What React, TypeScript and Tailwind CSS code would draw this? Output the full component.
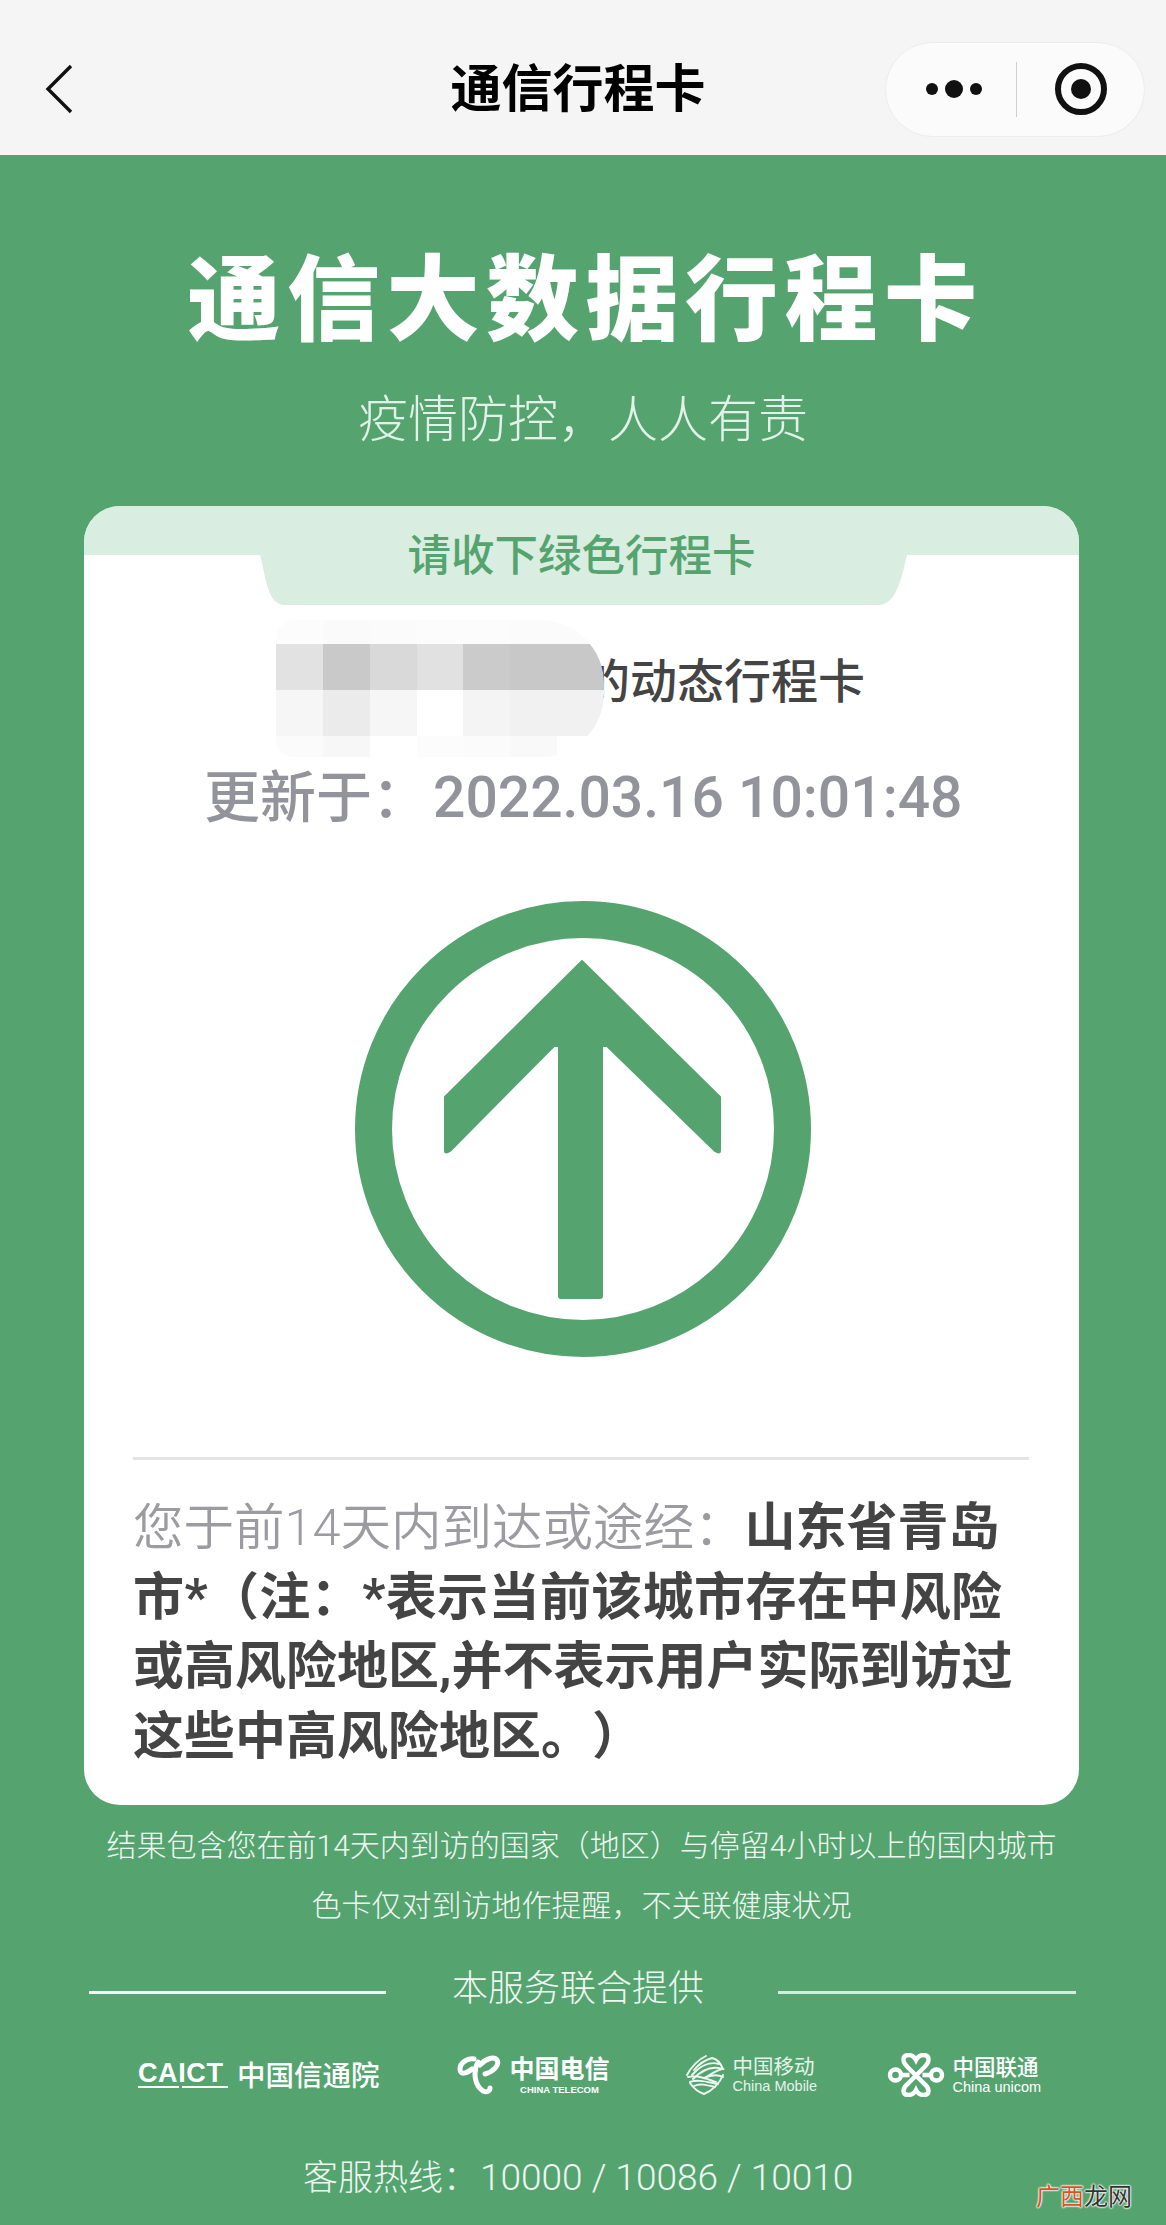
const mosaic = [
  ['#fcfcfc', '#fafafa', '#fbfbfb', '#fcfcfc', '#fcfcfc', '#fbfbfb', '#fbfbfb'],
  ['#e2e2e2', '#c9c9c9', '#d9d9d9', '#e1e1e1', '#cbcbcb', '#c8c8c8', '#c8c8c8'],
  ['#f6f6f6', '#ebebeb', '#f6f6f6', '#ffffff', '#f4f4f4', '#f1f1f1', '#f1f1f1'],
  ['#fbfbfb', '#f7f7f7', '#ffffff', '#fcfcfc', '#fbfbfb', '#f9f9f9', '#ffffff'],
]

function Mosaic() {
  return (
    <div className="relative z-10 grid w-[328px] h-[137px] shrink-0 grid-cols-7 grid-rows-[24px_46px_46px_21px] overflow-hidden rounded-tl-[20px] rounded-r-[64px] rounded-bl-[18px]">
      {mosaic.flat().map((c, i) => (
        <div key={i} style={{ backgroundColor: c }} />
      ))}
    </div>
  )
}

function BackIcon() {
  return (
    <svg width="28" height="50" viewBox="0 0 28 50" fill="none">
      <path d="M26 2 L3 25 L26 48" stroke="#111" strokeWidth="3.4" />
    </svg>
  )
}

function Capsule() {
  return (
    <div className="flex h-[95px] w-[260px] items-center rounded-full border border-[#ececec] bg-[#fbfbfb]">
      <div className="flex w-[130px] items-center justify-end gap-[7px] pr-[34px]">
        <span className="h-[12px] w-[12px] rounded-full bg-[#111]" />
        <span className="h-[18px] w-[18px] rounded-full bg-[#111]" />
        <span className="h-[12px] w-[12px] rounded-full bg-[#111]" />
      </div>
      <div className="h-[55px] w-px bg-[#cfcfcf]" />
      <div className="ml-[38px] flex h-[52px] w-[52px] items-center justify-center rounded-full border-[6px] border-[#111]">
        <span className="h-[20px] w-[20px] rounded-full bg-[#111]" />
      </div>
    </div>
  )
}

function ArrowBadge() {
  return (
    <svg width="456" height="456" viewBox="0 0 456 456" className="mx-auto block translate-x-[1px]">
      <circle cx="228" cy="228" r="209.5" fill="none" stroke="#55a470" strokeWidth="37" />
      <path
        d="M227 60 L365 196 V250 Q365 253 360 250 L252 145 H247 V395 Q247 397 245 397 H206 Q204 397 204 395 V145 H199 L95 250 Q90 253 90 250 V196 Z"
        fill="#55a470"
        stroke="#55a470"
        strokeWidth="2"
        strokeLinejoin="round"
      />
    </svg>
  )
}

function TelecomIcon() {
  return (
    <svg width="44" height="40" viewBox="0 0 44 40" fill="none" stroke="#fff" strokeWidth="5" strokeLinecap="round" className="shrink-0">
      <path d="M17 4 C10 3 3 8 3 14 C3 20 9 19 15 14" />
      <path d="M23 10 C28 4 37 1 40 5 C43 10 36 17 28 19" />
      <path d="M21 7 C16 16 17 30 26 36 C30 38 33 36 33 33" />
    </svg>
  )
}

function MobileIcon() {
  return (
    <svg width="40" height="40" viewBox="0 0 40 40" fill="none" stroke="#eef7f1" strokeWidth="1.9" strokeLinecap="round" className="shrink-0">
      <path d="M2 20 C6 12 14 4 21 1" />
      <path d="M9 15 C14 9 20 5 27 3 C32 4 36 9 38 14" />
      <path d="M7 20 C14 12 24 6 34 9" />
      <path d="M8 24 C16 16 26 10 37 14 C30 16 25 20 19 23 C28 19 34 20 38 22" />
      <path d="M3 22 C12 20 20 23 31 27" />
      <path d="M5 27 C13 24 22 27 33 29" />
      <path d="M9 31 C15 28 22 30 30 32" />
      <path d="M38 20 C35 28 27 36 19 39 C13 37 9 34 5 28" />
    </svg>
  )
}

function UnicomIcon() {
  return (
    <svg width="58" height="44" viewBox="0 0 57 44" fill="none" stroke="#fff" strokeWidth="4.4" className="shrink-0">
      <circle cx="8" cy="22" r="5.5" />
      <circle cx="49" cy="22" r="5.5" />
      <path d="M13 22 H22 M35 22 H44" />
      <path d="M20 14 C14 8 15 2 21 2 C25 2 27 4 28.5 7 C30 4 32 2 36 2 C42 2 43 8 37 14 L20 31 C14 36 15 42 21 42 C25 42 27 40 28.5 37 C30 40 32 42 36 42 C42 42 43 36 37 31 Z" />
    </svg>
  )
}

function Logos() {
  return (
    <div className="mt-[36px] flex h-[44px] items-center pl-[138px] text-white">
      <div className="flex items-center">
        <div className="flex h-[28px] w-[90px] flex-col">
          <span className="font-['Liberation_Sans',sans-serif] text-[27px] leading-[24px] font-bold tracking-[0.6px]">CAICT</span>
          <span className="mt-px flex gap-[3px]">
            <span className="h-[2px] w-[41px] bg-white" />
            <span className="h-[2px] w-[46px] bg-white" />
          </span>
        </div>
        <span className="mt-[3px] ml-[9px] text-[28.5px] leading-[30px] font-medium">中国信通院</span>
      </div>
      <div className="ml-[77px] flex items-center">
        <TelecomIcon />
        <div className="ml-[9px] flex w-[100px] flex-col items-center">
          <span className="text-[25px] leading-[30px] font-bold">中国电信</span>
          <span className="font-['Liberation_Sans',sans-serif] text-[9.5px] leading-[10px] font-bold whitespace-nowrap">CHINA TELECOM</span>
        </div>
      </div>
      <div className="ml-[75px] flex items-center text-[#e6f3ea]">
        <MobileIcon />
        <div className="ml-[8px] flex w-[82px] flex-col">
          <span className="text-[20.5px] leading-[22px]">中国移动</span>
          <span className="font-['Liberation_Sans',sans-serif] text-[14.5px] leading-[16px] whitespace-nowrap">China Mobile</span>
        </div>
      </div>
      <div className="ml-[72px] flex items-center">
        <UnicomIcon />
        <div className="ml-[8px] flex w-[87px] flex-col">
          <span className="text-[21.5px] leading-[23px] font-medium">中国联通</span>
          <span className="font-['Liberation_Sans',sans-serif] text-[14.5px] leading-[16px] whitespace-nowrap">China unicom</span>
        </div>
      </div>
    </div>
  )
}

export default function App() {
  return (
    <div lang="zh-CN" className="relative h-[2225px] w-full overflow-hidden bg-[#55a470] font-['Roboto','Noto_Sans_CJK_SC',sans-serif] [text-spacing-trim:space-all]">
      <header className="flex h-[155px] items-center justify-between bg-[#f5f5f5] pt-[23px] pr-[21px] pl-[45px]">
        <BackIcon />
        <h1 className="ml-[198px] text-[51px] leading-none font-bold text-black">通信行程卡</h1>
        <Capsule />
      </header>

      <div className="pt-[97px] text-center">
        <h2 className="pl-[5px] text-[93px] leading-[100px] font-black tracking-[6.5px] text-white">通信大数据行程卡</h2>
        <p className="mt-[40px] text-[50px] leading-[56px] font-light text-[#e3f2e8]">疫情防控，人人有责</p>
      </div>

      <main className="mt-[58px] mr-[87px] ml-[84px] h-[1299px] overflow-hidden rounded-[36px] bg-white">
        <div className="relative flex h-[99px] items-center justify-center pt-[2px]">
          <svg width="995" height="99" viewBox="0 0 995 99" className="absolute top-0 left-0">
            <path d="M0 0 H995 V49 H823 C818 70 813 99 794 99 H201 C183 99 182 70 176 49 H0 Z" fill="#d9ede0" />
          </svg>
          <span className="relative text-[43.5px] leading-none font-medium text-[#55a470]">请收下绿色行程卡</span>
        </div>

        <div className="mt-[15px] flex h-[137px] items-start pl-[192px]">
          <Mosaic />
          <span className="mt-[32px] -ml-[21px] text-[47px] leading-[60px] font-medium whitespace-nowrap text-[#444]">的动态行程卡</span>
        </div>

        <div className="mt-[11px] pl-[120px] text-[56px] leading-[60px] font-medium whitespace-nowrap text-[#93939b]">
          更新于：<span className="ml-[5px] text-[57px]">2022.03.16 10:01:48</span>
        </div>

        <div className="mt-[73px]">
          <ArrowBadge />
        </div>

        <div className="mt-[100px] mr-[50px] ml-[49px] h-[3px] bg-[#e4e4e6]" />

        <p className="mt-[33px] pl-[49px] text-[51px] leading-[69.5px] font-bold whitespace-nowrap text-[#444]">
          <span className="text-[50.5px] font-[350] text-[#9b9ba1]">您于前14天内到达或途经：</span>山东省青岛
          <br />
          <span className="tracking-[0.4px]">市*（注：*表示当前该城市存在中风险</span>
          <br />
          或高风险地区,并不表示用户实际到访过
          <br />
          这些中高风险地区。）
        </p>
      </main>

      <div className="mt-[11px] text-center text-[30px] leading-[60px] font-light text-[#f0f8f2]">
        <p className="-ml-[3px]">结果包含您在前14天内到访的国家（地区）与停留4小时以上的国内城市</p>
        <p className="-ml-[3px]">色卡仅对到访地作提醒，不关联健康状况</p>
      </div>

      <div className="mt-[31px] flex h-[50px] items-center justify-between pr-[90px] pl-[89px]">
        <div className="h-[3px] w-[297px] bg-[#f0f8f3]" />
        <span className="-translate-x-[4px] -translate-y-[3px] text-[36px] leading-[50px] font-light text-[#eef7f1]">本服务联合提供</span>
        <div className="h-[3px] w-[298px] bg-[#d5ebdc]" />
      </div>

      <Logos />

      <div className="mt-[56px] pl-[303px] text-[35px] leading-[50px] font-light whitespace-nowrap text-[#eef7f1]">
        客服热线：<span className="ml-[2px] text-[37px]">10000 / 10086 / 10010</span>
      </div>

      <div className="absolute top-[2183px] left-[1036px] text-[24px] leading-[28px] [text-shadow:0_0_2px_#fff,0_0_2px_#fff,0_0_2px_#fff,0_0_2px_#fff]">
        <span className="text-[#d9531e]">广西</span>
        <span className="text-[#333]">龙网</span>
      </div>
    </div>
  )
}
